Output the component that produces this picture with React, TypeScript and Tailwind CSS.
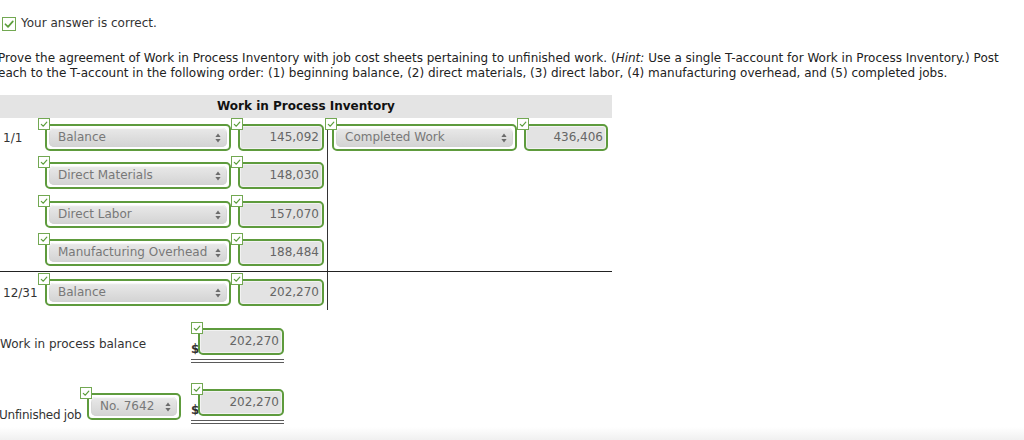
import React from "react";

const FONT = { fontFamily: '"DejaVu Sans", Verdana, sans-serif' };

function Tick({ big = false }: { big?: boolean }) {
  const s = big ? 14 : 12;
  return (
    <span
      className={
        (big ? "w-[14px] h-[14px]" : "w-[12px] h-[12px]") +
        " inline-flex items-center justify-center bg-white border border-[#72a852] box-border"
      }
    >
      <svg width={s - 2} height={s - 2} viewBox="0 0 10 10">
        <polyline
          points={big ? "2,5.2 4.2,7.4 8.2,2.8" : "2.3,5.4 4.3,7.2 7.8,3.2"}
          fill="none"
          stroke="#5c9e3c"
          strokeWidth={big ? 1.4 : 1.2}
          strokeLinecap="round"
          strokeLinejoin="round"
        />
      </svg>
    </span>
  );
}

function Arrows() {
  return (
    <svg width="6" height="10" viewBox="0 0 6 10">
      <polygon points="3,0.5 5.6,4 0.4,4" fill="#6b6b6b" />
      <polygon points="0.4,6 5.6,6 3,9.5" fill="#6b6b6b" />
    </svg>
  );
}

function SelectBox({ w, label }: { w: number; label: string }) {
  return (
    <div
      className="h-[27px] rounded-[5px] border-2 border-[#5e9b3d] bg-white p-[2px] box-border"
      style={{ width: w }}
    >
      <div className="h-full rounded-[5px] bg-gradient-to-b from-[#e9e9e9] via-[#dedede] to-[#d3d3d3] shadow-[inset_0_1px_1px_rgba(255,255,255,0.9),inset_0_0_0_1px_#d2d2d2] flex items-center justify-between pl-[9px] pr-[6px] text-[#787878]">
        <span className="whitespace-nowrap">{label}</span>
        <Arrows />
      </div>
    </div>
  );
}

function AmountBox({ w, value }: { w: number; value: string }) {
  return (
    <div
      className="h-[27px] rounded-[5px] border-2 border-[#5e9b3d] bg-[#e3e3e3] shadow-[inset_0_0_0_1px_#f2f2f2] box-border flex items-center justify-end pr-[3px] text-[#666]"
      style={{ width: w }}
    >
      {value}
    </div>
  );
}

function Field({ children, className = "" }: { children: React.ReactNode; className?: string }) {
  return (
    <div className={"relative pt-[6px] pl-[7px] " + className}>
      <div className="absolute top-0 left-0 z-10 flex">
        <Tick />
      </div>
      {children}
    </div>
  );
}

function DollarField({ value }: { value: string }) {
  return (
    <div className="w-[93px]">
      <div className="relative pt-[6px]">
        <div className="absolute top-0 left-0 z-10 flex">
          <Tick />
        </div>
        <div className="flex items-end">
          <span className="w-[7px] font-bold text-[#333] leading-[11px]">$</span>
          <AmountBox w={86} value={value} />
        </div>
      </div>
      <div className="mt-[4px] h-[4px] border-y border-[#5a5a5a]" />
    </div>
  );
}

function LeftRow({
  date,
  label,
  value,
  h,
}: {
  date?: string;
  label: string;
  value: string;
  h: number;
}) {
  return (
    <div className="flex" style={{ height: h }}>
      <div className="w-[38px] pl-[3px] pt-[13px] text-[#333]">{date}</div>
      <Field>
        <SelectBox w={186} label={label} />
      </Field>
      <Field>
        <AmountBox w={86} value={value} />
      </Field>
    </div>
  );
}

export default function App() {
  return (
    <div className="relative w-[1024px] h-[440px] overflow-hidden bg-white text-[12px] leading-[15px] text-[#333]" style={FONT}>
      <div className="flex items-center pt-[16px] pl-[2px] gap-[5px]">
        <Tick big />
        <span>Your answer is correct.</span>
      </div>

      <div className="mt-[20px] ml-[-2px] text-[#222]">
        <div className="whitespace-nowrap">
          Prove the agreement of Work in Process Inventory with job cost sheets pertaining to unfinished work. (
          <i>Hint:</i> Use a single T-account for Work in Process Inventory.) Post
        </div>
        <div className="whitespace-nowrap">
          each to the T-account in the following order: (1) beginning balance, (2) direct materials, (3) direct labor, (4) manufacturing overhead, and (5) completed jobs.
        </div>
      </div>

      <div className="mt-[14px] w-[612px]">
        <div className="h-[23px] bg-[#e4e4e4] flex items-center justify-center font-bold text-[#111]">
          Work in Process Inventory
        </div>
        <div className="flex">
          <div className="w-[328px] border-r border-[#333]">
            <LeftRow date="1/1" label="Balance" value="145,092" h={38} />
            <LeftRow label="Direct Materials" value="148,030" h={39} />
            <LeftRow label="Direct Labor" value="157,070" h={38} />
            <LeftRow label="Manufacturing Overhead" value="188,484" h={38} />
          </div>
          <div className="flex ml-[-3px]">
            <Field className="self-start">
              <SelectBox w={185} label="Completed Work" />
            </Field>
            <Field className="self-start">
              <AmountBox w={84} value="436,406" />
            </Field>
          </div>
        </div>
        <div className="border-t border-[#222]">
          <div className="w-[328px] border-r border-[#333] h-[38px] pt-[1px]">
            <LeftRow date="12/31" label="Balance" value="202,270" h={37} />
          </div>
        </div>
      </div>

      <div className="mt-[12px] flex">
        <div className="w-[192px] pt-[15px] ml-[-1px] pl-[1px]">Work in process balance</div>
        <DollarField value="202,270" />
      </div>

      <div className="mt-[20px] flex">
        <div className="w-[81px] pt-[25px] ml-[-1px] whitespace-nowrap tracking-[-0.25px]">Unfinished job</div>
        <Field className="mt-[4px]">
          <SelectBox w={94} label="No. 7642" />
        </Field>
        <div className="w-[10px]" />
        <DollarField value="202,270" />
      </div>

      <div className="absolute bottom-0 left-0 right-0 h-[13px] bg-gradient-to-b from-white to-[#f0f0f0]" />
    </div>
  );
}
